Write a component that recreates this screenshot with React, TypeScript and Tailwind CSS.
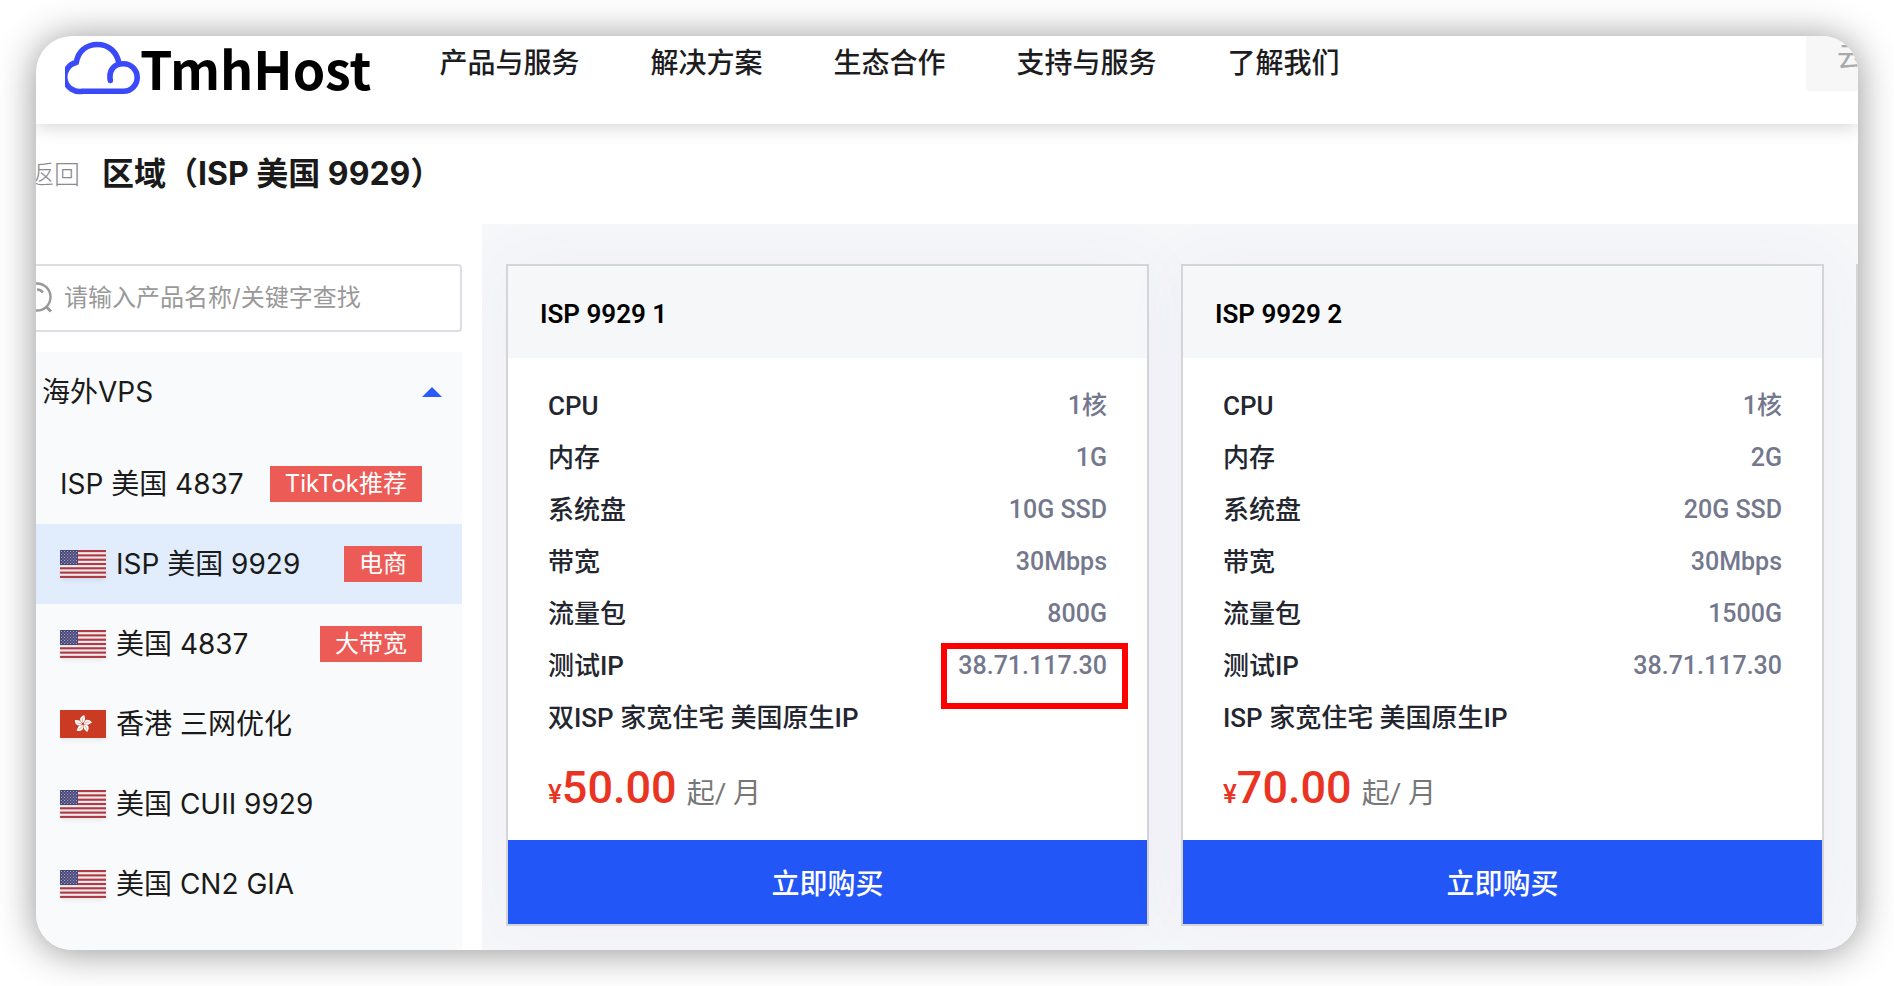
import React from 'react';

const navItems = ['产品与服务', '解决方案', '生态合作', '支持与服务', '了解我们'];

type Region = {
  name: string;
  flag?: 'us' | 'hk';
  tag?: string;
  active?: boolean;
};

const regions: Region[] = [
  { name: 'ISP 美国 4837', tag: 'TikTok推荐' },
  { name: 'ISP 美国 9929', flag: 'us', tag: '电商', active: true },
  { name: '美国 4837', flag: 'us', tag: '大带宽' },
  { name: '香港 三网优化', flag: 'hk' },
  { name: '美国 CUII 9929', flag: 'us' },
  { name: '美国 CN2 GIA', flag: 'us' },
];

type Plan = {
  title: string;
  specs: [string, string][];
  note: string;
  price: string;
  highlightIp?: boolean;
};

const plans: Plan[] = [
  {
    title: 'ISP 9929 1',
    specs: [
      ['CPU', '1核'],
      ['内存', '1G'],
      ['系统盘', '10G SSD'],
      ['带宽', '30Mbps'],
      ['流量包', '800G'],
      ['测试IP', '38.71.117.30'],
    ],
    note: '双ISP 家宽住宅 美国原生IP',
    price: '50.00',
    highlightIp: true,
  },
  {
    title: 'ISP 9929 2',
    specs: [
      ['CPU', '1核'],
      ['内存', '2G'],
      ['系统盘', '20G SSD'],
      ['带宽', '30Mbps'],
      ['流量包', '1500G'],
      ['测试IP', '38.71.117.30'],
    ],
    note: 'ISP 家宽住宅 美国原生IP',
    price: '70.00',
  },
];

const CloudLogo: React.FC = () => (
  <svg viewBox="0 0 75 54" className="w-[75px] h-[54px] shrink-0" fill="none" aria-hidden="true">
    <path
      d="M45.3 39.5C43.5 29 49 22.8 58.5 22.8A13.6 13.6 0 0 1 58.5 50.2H17.5A14.3 14.3 0 0 1 11.3 21.6C13 10.5 21 3.5 32.5 3.5C43.5 3.5 52 11 54 22.5"
      stroke="#3a49f9"
      strokeWidth="5.6"
      strokeLinecap="round"
      strokeLinejoin="round"
    />
  </svg>
);

const UsFlag: React.FC = () => (
  <svg viewBox="0 0 46 28" className="w-[46px] h-7 shrink-0 shadow-md shadow-black/5" aria-hidden="true">
    <rect width="46" height="28" fill="#f4eeee" />
    {Array.from({ length: 7 }, (_, i) => (
      <rect key={i} y={(i * 56) / 13} width="46" height={28 / 13} fill="#ae3b46" />
    ))}
    <rect width="18" height="15" fill="#4a4878" />
    {Array.from({ length: 9 }, (_, row) =>
      Array.from({ length: row % 2 ? 5 : 6 }, (_, col) => (
        <circle
          key={`${row}-${col}`}
          cx={(row % 2 ? 3 : 1.5) + col * 3}
          cy={1.5 + row * 1.5}
          r="0.5"
          fill="#c9c8de"
        />
      ))
    )}
  </svg>
);

const HkFlag: React.FC = () => (
  <svg viewBox="0 0 46 28" className="w-[46px] h-7 shrink-0 shadow-md shadow-black/5" aria-hidden="true">
    <rect width="46" height="28" fill="#cb3a22" />
    {[0, 72, 144, 216, 288].map((angle) => (
      <g key={angle} transform={`rotate(${angle} 23 14)`}>
        <path d="M23 13C19 11.5 19 6.5 24.5 5C24 7 27 9 23 13Z" fill="#fff" />
        <path d="M22.8 12C22 10.3 22.3 8.8 23.3 7.6" stroke="#cb3a22" strokeWidth="0.4" fill="none" />
      </g>
    ))}
  </svg>
);

const SearchIcon: React.FC = () => (
  <svg viewBox="0 0 32 32" className="size-8 shrink-0" fill="none" stroke="#999" strokeWidth="2.4" aria-hidden="true">
    <circle cx="15" cy="15" r="13.5" />
    <path d="M15 7.5C17.5 7.5 19.5 8.5 21 10.5" />
    <path d="M24 24.500L29 29.500" strokeWidth="3" />
  </svg>
);

const PlanCard: React.FC<{ plan: Plan }> = ({ plan }) => (
  <article className="w-[643px] shrink-0 border-2 border-[#d4d5d9] bg-white shadow-[0_0_60px_rgba(90,80,200,0.05)]">
    <h2 className="h-[92px] px-8 pt-1 flex items-center bg-[#f6f7f9] text-[26px] font-semibold text-black">
      {plan.title}
    </h2>
    <div className="px-10 pt-[22px] text-[26px] leading-[52px] font-medium text-[#23262f]">
      <dl>
        {plan.specs.map(([label, value]) => (
          <div key={label} className="relative flex justify-between">
            <dt>{label}</dt>
            <dd className="text-[25px] text-[#74788d]">{value}</dd>
            {plan.highlightIp && label === '测试IP' && (
              <span className="absolute top-[3px] right-[-21px] w-[187px] h-[66px] border-6 border-[#ff0000]" />
            )}
          </div>
        ))}
      </dl>
      <p>{plan.note}</p>
      <p className="h-24 flex items-baseline leading-[88px] text-[#ea3423]">
        <span className="text-[26px]">¥</span>
        <span className="text-[45px]">{plan.price}</span>
        <span className="ml-2.5 text-[28px] font-normal text-[#777]">起/ 月</span>
      </p>
    </div>
    <button type="button" className="w-full h-[84px] pt-1.5 bg-[#2356f6] text-[28px] font-medium text-white">
      立即购买
    </button>
  </article>
);

export default function App() {
  return (
    <div className="min-h-screen flex bg-white p-9 font-['Inter','Noto_Sans_CJK_SC',sans-serif]">
      <div className="flex-1 min-w-0 flex flex-col overflow-hidden rounded-[36px] bg-white shadow-[0_2px_38px_rgba(0,0,0,0.43)]">
        <header className="relative h-[88px] shrink-0 flex items-start pl-[29px] shadow-[0_2px_18px_rgba(0,0,0,0.18)]">
          <a href="#home" className="flex items-center h-16">
            <CloudLogo />
            <span className="text-[52px] leading-[64px] font-bold text-black font-['Noto_Sans_CJK_SC',sans-serif]">
              TmhHost
            </span>
          </a>
          <nav className="flex gap-[71px] ml-[68px] pt-[7px] text-[28px] leading-10 font-medium whitespace-nowrap text-[#1d1d1f]">
            {navItems.map((item) => (
              <a key={item} href="#nav">
                {item}
              </a>
            ))}
          </nav>
          <button
            type="button"
            className="ml-auto w-[52px] h-[55px] shrink-0 overflow-hidden rounded-bl bg-[#f7f7f7] pl-[31px] pb-4 text-left text-[28px] whitespace-nowrap text-[#aaa]"
          >
            云
          </button>
        </header>

        <div className="h-[100px] shrink-0 flex items-center gap-[22px]">
          <a href="#back" className="-ml-2 text-[26px] font-light text-[#8a8a90]">
            返回
          </a>
          <h1 className="text-[32px] font-bold text-[#1a1a1a]">区域（ISP 美国 9929）</h1>
        </div>

        <div className="flex-1 flex">
          <aside className="w-[426px] shrink-0 flex flex-col pt-10">
            <label className="-ml-5 h-[68px] flex items-center gap-2.5 rounded border-2 border-[#dddde3] pl-1">
              <SearchIcon />
              <input
                type="text"
                aria-label="产品搜索"
                placeholder="请输入产品名称/关键字查找"
                className="flex-1 min-w-0 outline-none text-[24px] placeholder:text-[#999]"
              />
            </label>
            <div className="flex-1 mt-5 bg-[#f9fafc] text-[28px] text-[#1a1a1a]">
              <button type="button" className="w-full h-20 mb-3 flex items-center justify-between pl-1.5 pr-5">
                海外VPS
                <svg viewBox="0 0 20 10" className="w-5 h-2.5" aria-hidden="true">
                  <path d="M10 0L20 10H0Z" fill="#2a5af7" />
                </svg>
              </button>
              <ul>
                {regions.map((region) => (
                  <li key={region.name}>
                    <a
                      href="#region"
                      className={`h-20 flex items-center gap-2.5 pl-6 pr-10 whitespace-nowrap ${
                        region.active ? 'bg-[#e1edfc]' : ''
                      }`}
                    >
                      {region.flag === 'us' && <UsFlag />}
                      {region.flag === 'hk' && <HkFlag />}
                      {region.name}
                      {region.tag && (
                        <span className="ml-auto h-9 px-[15px] bg-[#ed5b56] text-[24px] leading-9 text-white">
                          {region.tag}
                        </span>
                      )}
                    </a>
                  </li>
                ))}
              </ul>
            </div>
          </aside>

          <main className="flex-1 min-w-0 ml-5 flex items-start gap-8 overflow-hidden bg-[#f6f7f9] pt-10 pl-6 pb-6 font-['Roboto','Noto_Sans_CJK_SC',sans-serif]">
            {plans.map((plan) => (
              <PlanCard key={plan.title} plan={plan} />
            ))}
            {/* next card, only its left edge shows */}
            <div className="w-[643px] h-[662px] shrink-0 flex flex-col justify-end border-2 border-[#d4d5d9] bg-white">
              <div className="h-[84px] bg-[#2356f6]" />
            </div>
          </main>
        </div>
      </div>
    </div>
  );
}
